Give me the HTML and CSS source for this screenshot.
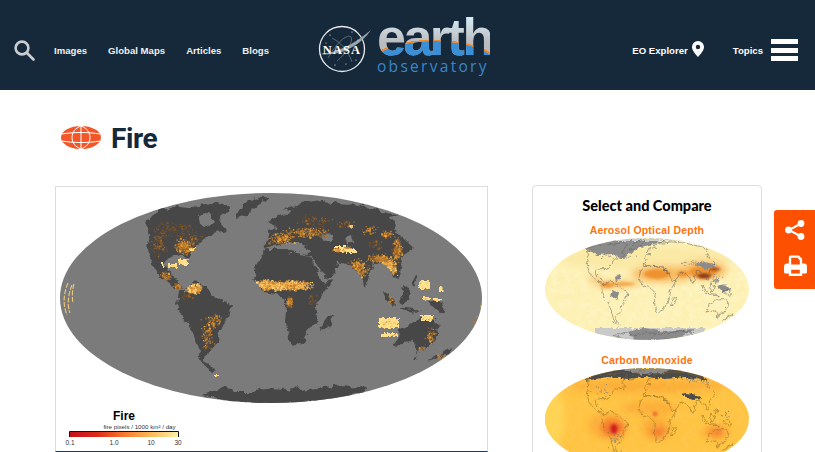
FILE: index.html
```html
<!DOCTYPE html>
<html lang="en">
<head>
<meta charset="utf-8">
<title>Fire</title>
<link rel="stylesheet" href="styles.css">
</head>
<body>
<header class="site-header">
  <div class="nav-left">
    <svg class="search-icon" viewBox="0 0 21 21"><circle cx="8" cy="8" r="6.4"/><path d="M13 13l6.5 6.5"/></svg>
    <nav class="main-nav">
      <a>Images</a><a>Global Maps</a><a>Articles</a><a>Blogs</a>
    </nav>
  </div>
  <div class="logo">
    <svg class="nasa" viewBox="0 0 54 50">
      <circle class="nasa-ring" cx="24" cy="25" r="22.5"/>
      <path class="nasa-orbit" d="M10 34C20 16 30 10 33 13c3 4-6 18-14 24M14 14c8 4 16 12 20 24"/>
      <path class="nasa-swoosh" d="M0 30C18 30 36 20 53 6C42 22 22 33 0 30Z"/>
      <g class="nasa-stars"><circle cx="12" cy="11" r=".6"/><circle cx="34" cy="8" r=".6"/><circle cx="38" cy="36" r=".6"/><circle cx="17" cy="41" r=".6"/><circle cx="28" cy="40" r=".5"/><circle cx="8" cy="19" r=".5"/><circle cx="40" cy="16" r=".5"/></g>
      <text class="nasa-text" x="24" y="29.5">NASA</text>
    </svg>
    <div class="wordmark">
      <div class="word-earth">earth</div>
      <div class="word-obs">observatory</div>
    </div>
  </div>
  <div class="nav-right">
    <a class="eo-link">EO Explorer
      <svg class="pin" viewBox="0 0 12 16"><path fill-rule="evenodd" d="M6 0a6 6 0 0 1 6 6c0 3.400-3.600 7.500-6 10C3.600 13.500 0 9.400 0 6a6 6 0 0 1 6-6Zm0 3.800a2.200 2.200 0 1 0 0 4.400 2.200 2.200 0 0 0 0-4.400Z"/></svg>
    </a>
    <a class="topics-link">Topics</a>
    <div class="burger"><span></span><span></span><span></span></div>
  </div>
</header>

<main class="page">
  <div class="page-title">
    <svg class="title-globe" viewBox="0 0 40 23">
      <ellipse class="g-fill" cx="20" cy="11.500" rx="20" ry="11.500"/>
      <path class="g-line" d="M1 8C12 6 28 6 39 8M1 15C12 17 28 17 39 15M20 0v23M20 0C8 4 8 19 20 23M20 0c12 4 12 19 0 23"/>
    </svg>
    <h1>Fire</h1>
  </div>
  <div class="columns">
    <figure class="map-figure">
      <svg class="fire-map" viewBox="55 187 431 264">
        <defs>
          <clipPath id="globe-clip"><ellipse cx="270" cy="298" rx="211" ry="105"/></clipPath>
          <linearGradient id="scale-grad">
            <stop offset="0" stop-color="#c40f1e"/><stop offset=".25" stop-color="#dd2a18"/><stop offset=".5" stop-color="#f9792e"/><stop offset=".75" stop-color="#fdb95a"/><stop offset="1" stop-color="#fff0a8"/>
          </linearGradient>
          <filter id="coast" x="-5%" y="-5%" width="110%" height="110%">
            <feTurbulence type="fractalNoise" baseFrequency=".11" numOctaves="4" seed="7" result="n"/>
            <feDisplacementMap in="SourceGraphic" in2="n" scale="9" xChannelSelector="R" yChannelSelector="G"/>
          </filter>
          <filter id="soft" x="-5%" y="-5%" width="110%" height="110%"><feGaussianBlur stdDeviation=".35"/></filter>
          <filter id="patch" x="-5%" y="-5%" width="110%" height="110%">
            <feTurbulence type="fractalNoise" baseFrequency=".3" numOctaves="3" seed="5" result="n"/>
            <feDisplacementMap in="SourceGraphic" in2="n" scale="5" xChannelSelector="R" yChannelSelector="G"/>
            <feGaussianBlur stdDeviation=".4"/>
          </filter>
          <g id="land">
            <path class="land-shape" d="M147 218L152 213L163 208L177 206L190 207L217 203L230 208L220 216L218 222L226 231L213 234L205 238L194 248L189 254L187 258L185 256L180 256L173 256L166 259L163 263L167 270L173 275L177 283L180 288L176 289L168 283L160 276L152 266L149 258L146 248L149 235L146 225Z"/>
            <path class="land-shape" d="M235 218L240 206L262 196L268 197L254 208L246 216Z"/>
            <path class="land-shape" d="M178 292L186 287L193 282L201 284L207 290L216 297L230 306L226 320L218 331L216 342L207 352L205 362L215 372L207 371L201 362L197 348L193 333L184 322L176 304Z"/>
            <path class="land-shape" d="M252 278L258 258L267 250L287 252L308 257L317 273L322 282L332 280L323 293L315 307L317 318L308 330L302 342L293 347L287 338L285 320L287 308L280 295L263 292Z"/>
            <path class="land-shape" d="M328 315L332 316L326 328L319 333L320 325Z"/>
            <path class="land-shape" d="M262 248L268 238L266 232L275 226L268 222L280 214L290 212L283 208L300 204L320 201L350 204L378 210L397 215L388 217L395 226L399 235L406 242L413 248L405 253L402 258L400 270L397 281L392 276L388 268L384 264L378 262L372 262L368 276L365 287L361 280L354 268L346 264L340 263L335 272L328 280L318 270L308 257L300 252L285 252L270 252Z"/>
            <path class="land-shape" d="M383 292L388 294L395 304L392 306L386 300Z"/>
            <path class="land-shape" d="M398 298L404 288L410 291L408 300L402 304Z"/>
            <path class="land-shape" d="M396 307L414 309L420 312L404 311Z"/>
            <path class="land-shape" d="M428 301L436 299L445 311L440 313L432 306Z"/>
            <path class="land-shape" d="M410 278L413 276L415 286L412 288Z"/>
            <path class="land-shape" d="M398 330L412 322L420 318L435 318L438 333L430 345L415 352L412 343L392 345L397 338Z"/>
            <path class="land-shape" d="M425 362L440 354L450 349L446 354L432 360Z"/>
            <path class="land-shape" d="M412 356L418 353L414 358Z"/>
            <path class="land-shape" d="M200 395L212 391L227 387L232 392L250 392L270 388L300 390L340 385L367 388L360 394L330 400L270 404L230 402Z"/>
          </g>
        </defs>
        <ellipse class="ocean" cx="270" cy="298" rx="211" ry="105"/>
        <g clip-path="url(#globe-clip)">
          <g filter="url(#coast)">
            <use href="#land" class="land-dark"/>
            <path class="hudson" d="M197 214L207 213L213 220L207 227L199 224Z"/>
            <path class="hudson" d="M264 248L285 243L300 243L312 250L306 254L290 250L270 250Z"/>
            <path class="hudson" d="M321 235L331 234L333 240L322 241Z"/>
            <path class="hudson" d="M344 238L350 236L352 245L346 245Z"/>
            <path class="hudson-line" d="M309 256L323 281M336 262L344 268"/>
          </g>
          <g id="fire-dots" filter="url(#soft)"></g>
          <g id="fire-patches" filter="url(#patch)"></g>
          <path class="ring" d="M67 283C62 295 62 305 66 315M71 285C67 295 66 305 69 313M73 284C71 290 71 298 72 303"/>
        </g>
        <text class="lg-title" x="123" y="420">Fire</text>
        <text class="lg-sub" x="138.500" y="428.500">fire pixels / 1000 km² / day</text>
        <rect class="lg-bar" x="69" y="432" width="108" height="5"/>
        <path class="lg-frame" d="M68.500 437V431.500H177.500V437"/>
        <text class="lg-tick" x="69" y="445">0.1</text>
        <text class="lg-tick" x="113" y="445">1.0</text>
        <text class="lg-tick" x="150" y="445">10</text>
        <text class="lg-tick" x="177" y="445">30</text>
      </svg>
    </figure>
    <aside class="compare">
      <h2>Select and Compare</h2>
      <h3>Aerosol Optical Depth</h3>
      <svg class="mini-map" viewBox="0 0 204 102">
        <defs>
          <clipPath id="mini-clip"><ellipse cx="102" cy="51" rx="102" ry="51"/></clipPath>
          <filter id="blur4" x="-30%" y="-30%" width="160%" height="160%"><feGaussianBlur stdDeviation="3.500"/></filter>
          <filter id="blur2" x="-30%" y="-30%" width="160%" height="160%"><feGaussianBlur stdDeviation="1.800"/></filter>
          <filter id="mini-coast" x="-5%" y="-5%" width="110%" height="110%">
            <feTurbulence type="fractalNoise" baseFrequency=".22" numOctaves="3" seed="7" result="n"/>
            <feDisplacementMap in="SourceGraphic" in2="n" scale="5" xChannelSelector="R" yChannelSelector="G"/>
          </filter>
          <filter id="mottle" x="0" y="0" width="100%" height="100%">
            <feTurbulence type="fractalNoise" baseFrequency=".16" numOctaves="3" seed="3"/>
            <feColorMatrix type="matrix" values="0 0 0 0 1  0 0 0 0 .72  0 0 0 0 .3  1.800 0 0 0 -.8"/>
          </filter>
          <filter id="mottle-pale" x="0" y="0" width="100%" height="100%">
            <feTurbulence type="fractalNoise" baseFrequency=".14" numOctaves="3" seed="11"/>
            <feColorMatrix type="matrix" values="0 0 0 0 1  0 0 0 0 .98  0 0 0 0 .85  0 2.400 0 0 -1"/>
          </filter>
        </defs>
        <ellipse class="aod-base" cx="102" cy="51" rx="102" ry="51"/>
        <g clip-path="url(#mini-clip)">
          <rect class="mottle-b" width="204" height="102"/>
          <rect class="mottle-a" width="204" height="102"/>
          <g filter="url(#blur4)">
            <ellipse class="aod-pale" cx="102" cy="20" rx="90" ry="12"/>
            <ellipse class="aod-mid" cx="118" cy="36" rx="32" ry="8"/>
            <ellipse class="aod-mid" cx="72" cy="46" rx="24" ry="2.500"/>
            <ellipse class="aod-mid" cx="50" cy="41" rx="7" ry="2.500"/>
            <ellipse class="aod-mid" cx="158" cy="32" rx="24" ry="9"/>
          </g>
          <g filter="url(#blur2)">
            <ellipse class="aod-strong" cx="62" cy="47" rx="7" ry="3"/>
            <ellipse class="aod-strong" cx="112" cy="36" rx="13" ry="5"/>
            <ellipse class="aod-strong" cx="138" cy="36" rx="6" ry="3"/>
            <ellipse class="aod-strong" cx="158" cy="34" rx="14" ry="6"/>
            <ellipse class="aod-strong" cx="78" cy="46" rx="12" ry="1.500"/>
          </g>
          <g filter="url(#blur2)">
            <ellipse class="aod-deep" cx="159" cy="38" rx="7" ry="2.500"/>
            <ellipse class="aod-deep" cx="170" cy="31" rx="5" ry="1.500"/>
          </g>
          <g filter="url(#mini-coast)">
            <path class="nodata-soft" d="M36 0H170V6L120 2L60 6ZM50 90H160V102H50Z"/>
            <path class="nodata" d="M40 11L58 3L122 3L96 9L78 20L68 16L52 17ZM150 26L160 24L172 27L162 32ZM66 58L68 52L74 54L72 62ZM70 38L74 36L76 42L71 43ZM172 48L180 46L186 52L178 54ZM82 94L100 90L114 93L150 91L130 102L90 102Z"/>
            <use href="#land" class="land-line" transform="translate(102 51) scale(.4835 .486) translate(-270 -298)"/>
          </g>
          <g id="aod-specks"></g>
        </g>
      </svg>
      <h3 class="second">Carbon Monoxide</h3>
      <svg class="mini-map" viewBox="0 0 204 102">
        <ellipse class="co-base" cx="102" cy="51" rx="102" ry="51"/>
        <g clip-path="url(#mini-clip)">
          <g filter="url(#blur4)">
            <ellipse class="co-edge" cx="6" cy="50" rx="14" ry="30"/>
            <ellipse class="co-mid" cx="102" cy="18" rx="80" ry="7"/>
            <ellipse class="co-mid" cx="105" cy="40" rx="28" ry="7"/>
            <ellipse class="co-mid" cx="62" cy="58" rx="18" ry="13"/>
            <ellipse class="co-mid" cx="112" cy="60" rx="16" ry="11"/>
            <ellipse class="co-mid" cx="170" cy="64" rx="14" ry="7"/>
            <ellipse class="co-hot" cx="68" cy="60" rx="12" ry="9"/>
            <ellipse class="co-hot" cx="113" cy="64" rx="8" ry="5"/>
            <ellipse class="co-hot" cx="172" cy="64" rx="8" ry="4"/>
          </g>
          <rect class="mottle-a" width="204" height="102"/>
          <g filter="url(#blur2)">
            <ellipse class="co-red" cx="69" cy="61" rx="3.500" ry="5"/>
            <ellipse class="co-red-soft" cx="110" cy="46" rx="2" ry="2"/>
          </g>
          <g filter="url(#mini-coast)">
            <path class="co-dark" d="M40 13L60 0L150 0L162 13L140 9L120 11L100 9L84 11L62 9Z"/>
            <path class="nodata" d="M76 0L130 0L118 5L96 6L86 4Z"/>
            <path class="co-dark" d="M137 26L142 25L152 27L157 31L148 32L142 30Z"/>
            <use href="#land" class="land-line co-line" transform="translate(102 51) scale(.4835 .486) translate(-270 -298)"/>
          </g>
          <g id="co-specks"></g>
        </g>
      </svg>
    </aside>
  </div>
</main>

<div class="tools">
  <svg class="tool-share" viewBox="0 0 22 22"><path d="M17 4.500L5 11l12 6.500"/><circle cx="17" cy="4.500" r="3.400"/><circle cx="4.500" cy="11" r="3.400"/><circle cx="17" cy="17.500" r="3.400"/></svg>
  <svg class="tool-print" viewBox="0 0 24 22"><path fill-rule="evenodd" d="M5 2.500A2 2 0 0 1 7 .5h8.500L19 4v5h2a3 3 0 0 1 3 3v6a1.500 1.500 0 0 1-1.500 1.500H19V22H5v-2.500H1.500A1.500 1.500 0 0 1 0 18v-6a3 3 0 0 1 3-3h2ZM7.500 3V10h9V5.500l-2.500-2.500ZM7.500 15.500v4h9v-4Z"/></svg>
</div>
<script src="map.js"></script>
</body>
</html>
```
FILE: styles.css
```css
* { box-sizing: border-box; }
html, body { margin: 0; padding: 0; height: 452px; overflow: hidden; background: #fff; }
body { font-family: "Liberation Sans", Arial, sans-serif; }

.site-header {
  display: flex;
  align-items: center;
  height: 90px;
  background: #15293b;
  color: #fff;
}
.nav-left { display: flex; align-items: center; padding: 10px 0 0 14px; }
.search-icon { width: 21px; height: 21px; fill: none; stroke: #c9cdd1; stroke-width: 2.600; stroke-linecap: round; }
.main-nav { display: flex; gap: 21px; margin-left: 19px; font-size: 9.600px; font-weight: 700; color: #eef0f2; }

.logo { display: flex; margin-left: 49px; align-items: flex-start; height: 56px; }
.nasa { width: 54px; height: 50px; margin-top: 7px; flex: none; }
.nasa-ring { fill: #15293b; stroke: #e8eaec; stroke-width: 1.300; }
.nasa-orbit { fill: none; stroke: #8a949c; stroke-width: .6; }
.nasa-swoosh { fill: #9aa3aa; }
.nasa-stars { fill: #fff; }
.nasa-text { font-family: "Liberation Serif", serif; font-weight: 700; font-size: 12.500px; fill: #fff; text-anchor: middle; letter-spacing: 1.100px; }
.wordmark { margin-left: 5px; width: 113px; }
.word-earth {
  height: 42px;
  font-family: "Liberation Sans", sans-serif;
  font-size: 52px;
  font-weight: 700;
  line-height: 40px;
  letter-spacing: -2.500px;
  background-image:
    radial-gradient(ellipse 70px 30px at 50% 53px, #3a8fd9 0, #3a8fd9 95%, #ef8a2c 96%, #ef8a2c 100%, transparent 101%),
    linear-gradient(#d4ecf5 0, #c8d0d6 35%, #b9bcbf 60%);
  -webkit-background-clip: text;
  background-clip: text;
  color: transparent;
}
.word-obs { font-family: "Open Sans", sans-serif; font-size: 15.500px; line-height: 15px; letter-spacing: 2.300px; color: #3b86c9; white-space: nowrap; }

.nav-right { display: flex; align-items: center; margin-left: auto; padding: 10px 17px 0 0; font-size: 9.600px; font-weight: 700; }
.eo-link { display: flex; align-items: center; gap: 4px; }
.pin { width: 12px; height: 16px; fill: #fff; margin-top: -2px; }
.topics-link { margin-left: 29px; }
.burger { display: flex; flex-direction: column; gap: 3.500px; width: 27px; margin-left: 8px; }
.burger span { display: block; height: 5px; background: #fff; }

.page { padding: 36px 54px 0 55px; }
.page-title { display: flex; align-items: center; height: 23px; padding-left: 6px; gap: 10px; }
.title-globe { width: 40px; height: 23px; flex: none; }
.g-fill { fill: #f2572a; }
.g-line { fill: none; stroke: #fff; stroke-width: 1; }
.page-title h1 { margin: 1px 0 0; font-family: Roboto, sans-serif; font-size: 28px; font-weight: 700; letter-spacing: -.4px; color: #15293b; line-height: 23px; }

.columns { display: flex; align-items: flex-start; gap: 44px; margin-top: 37px; }
.map-figure {
  flex: none;
  width: 433px;
  height: 266px;
  margin: 0;
  border: 1px solid #dcdcdc;
  border-bottom: 1px solid #173d63;
}
.fire-map { display: block; width: 431px; height: 264px; }
.ocean { fill: #7b7b7b; }
.land-dark { fill: #474747; }
.hudson { fill: #7b7b7b; }
.hudson-line { fill: none; stroke: #7b7b7b; stroke-width: 1.600; }
.ring { fill: none; stroke: #efc878; stroke-width: 1.100; stroke-dasharray: 5 1.500; }
.lg-title { font-size: 12px; font-weight: 700; text-anchor: middle; fill: #000; }
.lg-sub { font-size: 6.200px; text-anchor: middle; fill: #333; }
.lg-bar { fill: url(#scale-grad); }
.lg-frame { fill: none; stroke: #111; stroke-width: 1; }
.lg-tick { font-size: 6.500px; text-anchor: middle; fill: #333; }

.compare {
  flex: none;
  width: 230px;
  margin-top: -1px;
  height: 290px;
  padding: 11px 12px 0;
  border: 1px solid #dddddd;
  border-radius: 4px;
  text-align: center;
}
.compare h2 { margin: 0; font-family: Lato, sans-serif; font-size: 14.500px; line-height: 18px; font-weight: 900; color: #000; }
.compare h3 { margin: 8px 0 0; font-size: 10.500px; line-height: 14px; font-weight: 700; letter-spacing: .2px; color: #fb7410; }
.compare h3.second { margin-top: 13px; }
.mini-map { display: block; width: 204px; height: 102px; margin: 1px 0 0; }
.mottle-a { filter: url(#mottle); opacity: .22; }
.mottle-b { filter: url(#mottle-pale); opacity: .3; }
.aod-base { fill: #fdf2b6; }
.aod-pale { fill: #fbe9a6; }
.aod-mid { fill: #f8bb62; }
.aod-strong { fill: #ee8d2a; opacity: .9; }
.aod-deep { fill: #8f2f0c; }
.nodata { fill: #8b8b8b; }
.nodata-soft { fill: #c9c9c9; }
.land-line { fill: none; stroke: #5f5f5f; stroke-width: 1.100; }
.co-base { fill: #ffc443; }
.co-edge { fill: #ffd455; }
.co-mid { fill: #fcae38; }
.co-hot { fill: #f3702a; }
.co-red { fill: #cf1b1c; }
.co-red-soft { fill: #e04a20; }
.co-dark { fill: #4b4b4b; }
.co-line { stroke: #8a6a22; }

.tools {
  position: fixed;
  top: 210px;
  right: 0;
  width: 41px;
  height: 79px;
  display: flex;
  flex-direction: column;
  align-items: center;
  gap: 14px;
  padding: 9px 0 0 0;
  background: #fd5000;
  border-radius: 3px 0 0 3px;
}
.tool-share { width: 22px; height: 22px; fill: #fff; }
.tool-share path { fill: none; stroke: #fff; stroke-width: 2; }
.tool-print { width: 23px; height: 21px; fill: #fff; margin-left: 1px; }
```
FILE: map.js
```js
// Seeded scatter of the data pixels on the three global maps.
(function () {
  var NS = "http://www.w3.org/2000/svg";
  var seed = 4242;
  function rnd() { seed = (seed * 1664525 + 1013904223) >>> 0; return seed / 4294967296; }
  function gauss() { return (rnd() + rnd() + rnd()) / 1.5 - 1; }
  function dot(group, x, y, w, h, fill) {
    var r = document.createElementNS(NS, "rect");
    r.setAttribute("x", x.toFixed(1));
    r.setAttribute("y", y.toFixed(1));
    r.setAttribute("width", w);
    r.setAttribute("height", h);
    r.setAttribute("fill", fill);
    group.appendChild(r);
  }
  var shapes = Array.prototype.slice.call(document.querySelectorAll(".land-shape"));
  var svg = document.querySelector(".fire-map");
  function onLand(x, y) {
    var p = svg.createSVGPoint();
    p.x = x;
    p.y = y;
    return shapes.some(function (s) { return s.isPointInFill(p); });
  }
  var dim = ["#5e4632", "#6e4c2c", "#865a28", "#a46a28"];
  var mid = ["#8e5c26", "#b87428", "#d88e30", "#eba840"];
  var hot = ["#c67e2c", "#e89c38", "#f7b850", "#ffd67c"];
  var solid = ["#e9a446", "#f2b654", "#d89034", "#fff0b8"];
  // cx, cy, rx, ry, count, palette
  var fire = [
    [183, 246, 13, 10, 300, mid], [192, 238, 14, 8, 40, dim], [158, 242, 10, 18, 110, dim], [175, 228, 24, 10, 110, dim],
    [163, 276, 8, 8, 80, mid], [178, 286, 8, 6, 80, mid], [193, 288, 10, 7, 220, hot], [185, 296, 7, 5, 30, dim],
    [206, 335, 9, 18, 90, mid], [213, 320, 12, 7, 70, mid], [207, 346, 5, 6, 18, dim],
    [284, 285, 34, 6, 1000, hot], [263, 284, 11, 6, 300, hot], [288, 302, 5, 8, 80, mid], [310, 300, 6, 8, 26, dim], [305, 338, 6, 7, 16, dim], [290, 345, 2, 2, 5, hot],
    [280, 238, 15, 7, 160, mid], [305, 232, 30, 7, 220, mid], [316, 220, 28, 8, 80, dim], [345, 224, 14, 6, 45, dim], [349, 226, 3, 2, 14, hot],
    [368, 230, 10, 5, 50, mid], [386, 234, 8, 5, 55, mid], [375, 244, 10, 8, 50, dim],
    [342, 249, 14, 3, 140, hot], [357, 268, 13, 12, 300, mid], [385, 266, 13, 12, 560, hot], [396, 248, 7, 15, 180, mid], [378, 258, 14, 5, 170, mid],
    [390, 300, 6, 7, 30, mid], [430, 336, 8, 10, 60, mid], [420, 348, 6, 3, 24, mid], [405, 322, 10, 5, 20, dim],
    [440, 357, 8, 3, 16, mid]
  ];
  // x, y, w, h of saturated patches
  var patches = [
    [167, 264, 9, 4], [178, 259, 9, 6], [188, 248, 6, 3], [161, 263, 2.500, 4], [213, 375, 5, 2],
    [378, 318, 19, 10], [380, 333, 17, 4], [420, 315, 12, 6], [417, 281, 12, 8], [438, 286, 3.500, 5], [422, 297, 7, 3], [432, 298, 9, 3],
    [334, 246, 10, 3], [344, 249, 11, 4], [349, 226, 3, 1.500]
  ];
  var g = document.getElementById("fire-dots");
  var pg = document.getElementById("fire-patches");
  patches.forEach(function (p) {
    dot(pg, p[0], p[1], p[2], p[3], "#ffdf88");
    for (var i = 0; i < p[2] * p[3] * 0.12; i++) {
      dot(pg, p[0] + rnd() * (p[2] - 1), p[1] + rnd() * (p[3] - 1), 1, 1, solid[Math.floor(rnd() * 4)]);
    }
  });
  fire.forEach(function (c) {
    for (var i = 0; i < c[4]; i++) {
      var x = c[0] + gauss() * c[2];
      var y = c[1] + gauss() * c[3];
      if (!onLand(x, y)) continue;
      var size = rnd() < 0.1 ? 2 : 1;
      dot(g, x, y, size, size, c[5][Math.floor(rnd() * 4)]);
    }
  });
  [[474, 320, 5, 8, 12], [480, 305, 1.500, 5, 7], [440, 356, 7, 3, 10]].forEach(function (c) {
    for (var i = 0; i < c[4]; i++) {
      dot(g, c[0] + gauss() * c[2], c[1] + gauss() * c[3], 1, 1, mid[Math.floor(rnd() * 4)]);
    }
  });

  function specks(id, list, colour) {
    var el = document.getElementById(id);
    list.forEach(function (c) {
      for (var i = 0; i < c[4]; i++) {
        dot(el, c[0] + gauss() * c[2], c[1] + gauss() * c[3], 1, 1, colour);
      }
    });
  }
  specks("aod-specks", [[75, 18, 30, 4, 24], [150, 25, 24, 5, 30], [170, 42, 10, 8, 20], [60, 10, 30, 6, 10]], "#8f8f8f");
  specks("co-specks", [[60, 24, 22, 10, 16], [150, 12, 20, 5, 20], [70, 72, 8, 14, 26], [150, 92, 30, 4, 24], [180, 45, 8, 6, 10]], "#8a8577");
})();
```
